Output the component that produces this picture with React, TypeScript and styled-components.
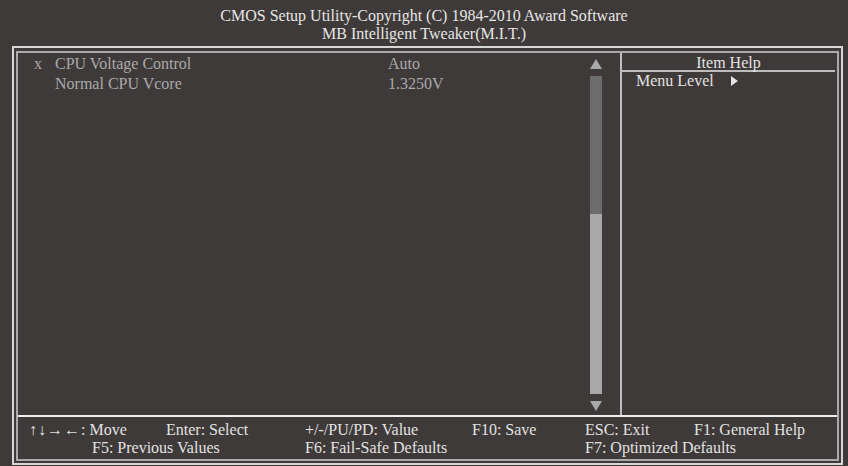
import React from "react";
import styled, { createGlobalStyle } from "styled-components";

const Global = createGlobalStyle`
  html, body { margin: 0; padding: 0; background: #3e3a39; }
  body { font-family: "Liberation Serif", "Times New Roman", serif; }
`;

const Page = styled.div`
  width: 848px;
  height: 466px;
  background: #3e3a39;
  color: #e2e2e2;
  font-family: "Liberation Serif", "Times New Roman", serif;
  font-size: 16px;
  overflow: hidden;
`;

const Header = styled.header`
  height: 46px;
  display: flex;
  flex-direction: column;
  align-items: center;
  justify-content: flex-start;
  padding-top: 7px;
  box-sizing: border-box;
  line-height: 18px;
  color: #e6e6e6;
`;

const Outer = styled.div`
  margin-left: 12px;
  width: 831px;
  height: 419px;
  box-sizing: border-box;
  border: 2px solid #d6d6d6;
  padding: 3px 2px 2px 2px;
`;

const Inner = styled.div`
  height: 100%;
  box-sizing: border-box;
  border: 2px solid #a9a9a9;
  display: grid;
  grid-template-rows: 362px 1fr;
`;

const Main = styled.div`
  display: grid;
  grid-template-columns: 1fr 2px 215px;
`;

const ItemsPane = styled.div`
  display: grid;
  grid-template-columns: 1fr 12px;
  padding-right: 18px;
`;

const ItemList = styled.div`
  padding-top: 1px;
  display: flex;
  flex-direction: column;
`;

const ItemRow = styled.div`
  height: 20px;
  display: grid;
  grid-template-columns: 16px 21px 333px 1fr;
  align-items: center;
  color: #a9a9a9;
  line-height: 20px;
`;

const Mark = styled.span`
  grid-column: 2;
`;

const Label = styled.span`
  grid-column: 3;
`;

const Value = styled.span`
  grid-column: 4;
`;

const Scroll = styled.div`
  display: flex;
  flex-direction: column;
  align-items: stretch;
  padding-top: 6px;
`;

const Arrow = styled.svg<{ $gap?: number }>`
  display: block;
  width: 12px;
  height: 10px;
  margin-top: ${(p) => p.$gap ?? 0}px;
`;

const Track = styled.div`
  margin-top: 7px;
  height: 318px;
  display: flex;
  flex-direction: column;
`;

const TrackPart = styled.div<{ $light?: boolean; $h: number }>`
  height: ${(p) => p.$h}px;
  background: ${(p) => (p.$light ? "#a8a8a8" : "#6c6c6c")};
`;

const Divider = styled.div`
  background: #bdbdbd;
  width: 2px;
`;

const HelpPane = styled.div`
  display: flex;
  flex-direction: column;
  padding-right: 2px;
`;

const HelpTitle = styled.div`
  height: 17px;
  line-height: 19px;
  text-align: center;
  color: #e2e2e2;
  border-bottom: 2px solid #bdbdbd;
`;

const HelpLine = styled.div`
  padding-left: 14px;
  height: 18px;
  line-height: 18px;
  display: flex;
  align-items: center;
  gap: 17px;
  color: #e2e2e2;
`;

const Footer = styled.footer`
  border-top: 2px solid #efefef;
  padding-top: 4px;
  display: grid;
  grid-template-rows: 18px 18px;
  color: #e2e2e2;
`;

const FootRow = styled.div`
  height: 18px;
  line-height: 18px;
  display: grid;
  grid-template-columns: 137px 139px 167px 113px 109px 1fr;
  padding-left: 11px;
  white-space: nowrap;
`;

const FootCell = styled.span<{ $indent?: number; $span?: number }>`
  padding-left: ${(p) => p.$indent ?? 0}px;
  grid-column: ${(p) => (p.$span ? `span ${p.$span}` : "auto")};
`;

const Keys = styled.span`
  letter-spacing: 1px;
`;

export default function App() {
  return (
    <Page>
      <Global />
      <Header>
        <div>CMOS Setup Utility-Copyright (C) 1984-2010 Award Software</div>
        <div>MB Intelligent Tweaker(M.I.T.)</div>
      </Header>
      <Outer>
        <Inner>
          <Main>
            <ItemsPane>
              <ItemList>
                <ItemRow>
                  <Mark>x</Mark>
                  <Label>CPU Voltage Control</Label>
                  <Value>Auto</Value>
                </ItemRow>
                <ItemRow>
                  <Label>Normal CPU Vcore</Label>
                  <Value>1.3250V</Value>
                </ItemRow>
              </ItemList>
              <Scroll>
                <Arrow viewBox="0 0 12 10">
                  <polygon points="6,0 12,10 0,10" fill="#a8a8a8" />
                </Arrow>
                <Track>
                  <TrackPart $h={138} />
                  <TrackPart $h={180} $light />
                </Track>
                <Arrow viewBox="0 0 12 10" $gap={7}>
                  <polygon points="0,0 12,0 6,10" fill="#a8a8a8" />
                </Arrow>
              </Scroll>
            </ItemsPane>
            <Divider />
            <HelpPane>
              <HelpTitle>Item Help</HelpTitle>
              <HelpLine>
                <span>Menu Level</span>
                <svg width="7" height="10" viewBox="0 0 7 10">
                  <polygon points="0,0 7,5 0,10" fill="#e2e2e2" />
                </svg>
              </HelpLine>
            </HelpPane>
          </Main>
          <Footer>
            <FootRow>
              <FootCell>
                <Keys>↑↓→←</Keys>: Move
              </FootCell>
              <FootCell>Enter: Select</FootCell>
              <FootCell>+/-/PU/PD: Value</FootCell>
              <FootCell>F10: Save</FootCell>
              <FootCell>ESC: Exit</FootCell>
              <FootCell>F1: General Help</FootCell>
            </FootRow>
            <FootRow>
              <FootCell $indent={63} $span={2}>
                F5: Previous Values
              </FootCell>
              <FootCell $span={2}>F6: Fail-Safe Defaults</FootCell>
              <FootCell $span={2}>F7: Optimized Defaults</FootCell>
            </FootRow>
          </Footer>
        </Inner>
      </Outer>
    </Page>
  );
}
